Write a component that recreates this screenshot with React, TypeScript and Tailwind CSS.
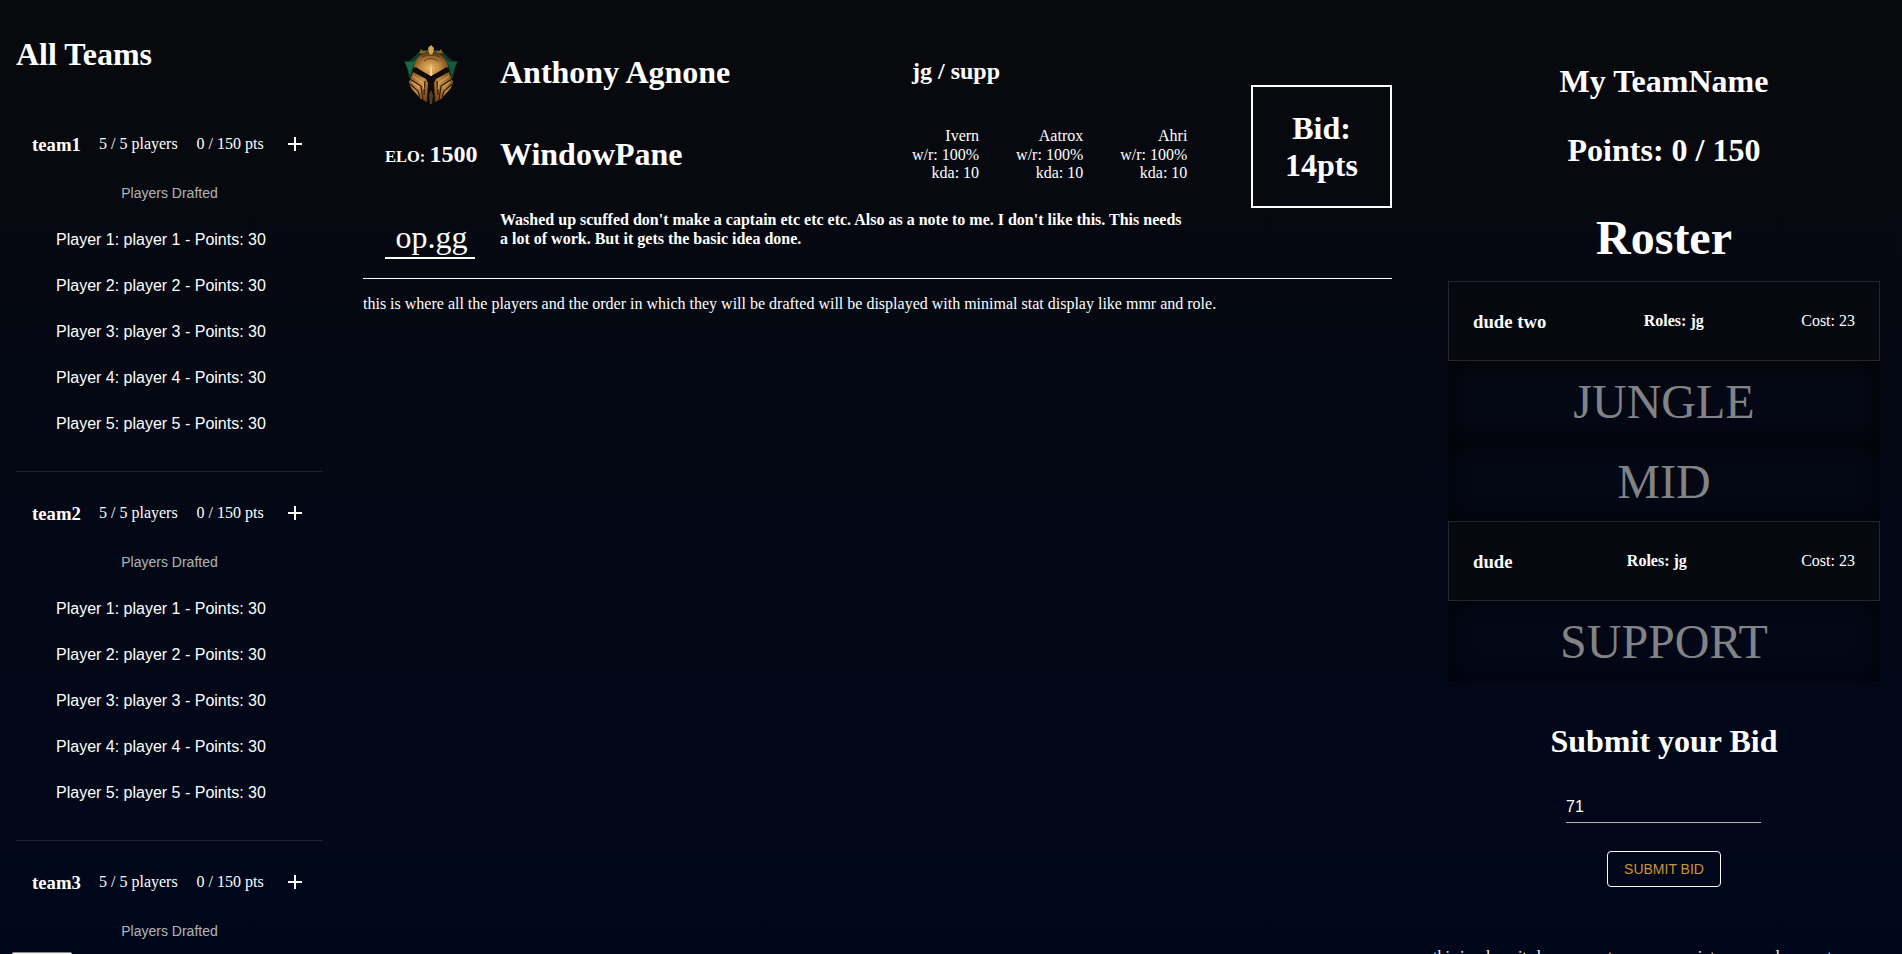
import React from "react";

const teams = ["team1", "team2", "team3"];
const players = [1, 2, 3, 4, 5];
const champions = ["Ivern", "Aatrox", "Ahri"];

function Helmet() {
  return (
    <svg width="54" height="60" viewBox="0 0 54 60" className="block">
      <defs>
        <radialGradient id="dome" cx="0.48" cy="0.62" r="0.62">
          <stop offset="0" stopColor="#eab968" />
          <stop offset="0.45" stopColor="#c08a40" />
          <stop offset="0.8" stopColor="#8a5825" />
          <stop offset="1" stopColor="#4a2a10" />
        </radialGradient>
        <linearGradient id="cheekL" x1="0" y1="0" x2="1" y2="1">
          <stop offset="0" stopColor="#7a4b1c" />
          <stop offset="0.5" stopColor="#c8924a" />
          <stop offset="1" stopColor="#5e3212" />
        </linearGradient>
        <linearGradient id="cheekR" x1="1" y1="0" x2="0" y2="1">
          <stop offset="0" stopColor="#6e4218" />
          <stop offset="0.5" stopColor="#c08a42" />
          <stop offset="1" stopColor="#5e3212" />
        </linearGradient>
      </defs>
      <path d="M0 16 L5 16 L10 12 L15 7 L39 7 L44 12 L49 16 L54 16 L51 23 L49 33 L5 33 L3 23 Z" fill="#0b3d2a" />
      <path d="M1 17 L9 17 L12 14 L8 24 L6 31 L4 24 Z" fill="#1b6b4a" />
      <path d="M53 17 L45 17 L42 14 L46 24 L48 31 L50 24 Z" fill="#155a3e" />
      <path d="M15 8 L17 4 L19 6 L27 5 L35 6 L37 4 L39 8 L33 9 L27 8 L21 9 Z" fill="#8f6228" />
      <path d="M19 5 L27 7 L35 5 L32 8 L22 8 Z" fill="#1a6a48" />
      <path d="M5 38 L10 22 L27 33 L44 22 L49 38 L47 44 L38 53 L32 58 L27 60 L22 58 L16 53 L7 44 Z" fill="#120905" />
      <path d="M10 22 C11 12 18 7 27 7 C36 7 43 12 44 22 L42 25 L27 33 L12 25 Z" fill="url(#dome)" />
      <path d="M27 18 L28.5 30 L27 33 L25.5 30 Z" fill="#f6d596" />
      <path d="M18 12 Q27 8 36 12 M20 16 Q27 11 34 16" fill="none" stroke="#5e3814" strokeWidth="0.9" />
      <path d="M11 23 L14 25 L27 32.5 L40 25 L43 23" fill="none" stroke="#060303" strokeWidth="2.2" />
      <path d="M9 27 L22 34 L24 38 L23 57 L17 54 L7 43 L5 37 Z" fill="url(#cheekL)" />
      <path d="M45 27 L32 34 L30 38 L31 57 L37 54 L47 43 L49 37 Z" fill="url(#cheekR)" />
      <path d="M6 34 L17 41 L19 55 M6 39 L14 46 L16 52 M21 36 L20 50" fill="none" stroke="#331808" strokeWidth="1.2" />
      <path d="M48 34 L37 41 L35 55 M48 39 L40 46 L38 52 M33 36 L34 50" fill="none" stroke="#331808" strokeWidth="1.2" />
      <path d="M9 31 L19 38 L20 44 M8 37 L15 42 M45 31 L35 38 L34 44 M46 37 L39 42" fill="none" stroke="#e3b368" strokeWidth="0.9" />
      <path d="M27 45 L29 50 L28 59 L26 59 L25 50 Z" fill="#4a4030" />
      <path d="M27 0 L30 3 L29 8 L27 10 L25 8 L24 3 Z" fill="#d8a458" />
    </svg>
  );
}

function Team({ name }: { name: string }) {
  return (
    <section className="h-[369px] shrink-0 border-b border-[#20232f] px-4">
      <div className="flex h-[66px] items-center pt-[16px]">
        <h3 className="w-[67px] pt-[1px] text-[18.72px] font-bold">{name}</h3>
        <span className="w-[97.5px] whitespace-nowrap">5 / 5 players</span>
        <span className="w-[86px] whitespace-nowrap">0 / 150 pts</span>
        <svg width="24" height="24" viewBox="0 0 24 24" fill="white">
          <path d="M19 13h-6v6h-2v-6H5v-2h6V5h2v6h6v2z" />
        </svg>
      </div>
      <div className="font-['Liberation_Sans',sans-serif]">
        <div className="flex h-12 items-center justify-center text-[14px] text-white/70">
          Players Drafted
        </div>
        {players.map((n) => (
          <div key={n} className="flex h-[46px] items-center px-6">
            {`Player ${n}: player ${n} - Points: 30`}
          </div>
        ))}
      </div>
    </section>
  );
}

function Filled({ name }: { name: string }) {
  return (
    <div className="flex h-20 shrink-0 justify-between border border-[#24262d] bg-[#05080f] px-6 pt-[30px]">
      <h3 className="text-[18.72px] leading-[20px] font-bold">{name}</h3>
      <h4 className="font-bold">Roles: jg</h4>
      <p>Cost: 23</p>
    </div>
  );
}

function Empty({ role }: { role: string }) {
  return (
    <div className="flex h-20 shrink-0 items-center justify-center text-[48px] leading-[55px] text-[#828387] shadow-[inset_0_0_20px_4px_rgba(0,0,0,0.7)]">
      {role}
    </div>
  );
}

export default function App() {
  return (
    <main className="relative flex h-[954px] w-[1902px] overflow-hidden bg-linear-to-b from-[#08090c] via-[#040815] to-[#01071b] font-['Liberation_Serif',serif] text-[16px] leading-[18px] text-white">
      <aside className="flex w-[323px] shrink-0 flex-col pl-4">
        <h1 className="h-[103px] shrink-0 pt-[36px] text-[32px] leading-[37px] font-bold">All Teams</h1>
        {teams.map((t) => (
          <Team key={t} name={t} />
        ))}
      </aside>

      <section className="ml-10 w-[1029px] shrink-0">
        <div className="box-content flex h-[258px] border-b border-white pb-[20px]">
          <div className="flex w-[137px] flex-col pl-[22px]">
            <div className="mt-[45px] ml-[19px]"><Helmet /></div>
            <div className="mt-[35px] whitespace-nowrap font-bold leading-[28px]">
              <span className="text-[16.5px]">ELO: </span>
              <span className="text-[24px]">1500</span>
            </div>
            <div className="mt-[48px] flex h-[40px] w-[90px] shrink-0 justify-center border-b-2 border-white pl-[3px] text-[32px] leading-[37px]">op.gg</div>
          </div>
          <div className="w-[700px]">
            <div className="flex h-[208px]">
              <div className="w-[412px] text-[32px] leading-[37px] font-bold">
                <h1 className="pt-[54px]">Anthony Agnone</h1>
                <h1 className="pt-[45px]">WindowPane</h1>
              </div>
              <div>
                <h2 className="pt-[57px] text-[24px] leading-[28px] font-bold">jg / supp</h2>
                <div className="mt-[42px] flex gap-[37px] text-right leading-[18.6px]">
                  {champions.map((c) => (
                    <div key={c}>
                      <p>{c}</p>
                      <p>w/r: 100%</p>
                      <p>kda: 10</p>
                    </div>
                  ))}
                </div>
              </div>
            </div>
            <h4 className="w-[690px] pt-[2px] leading-[19px] font-bold">
              Washed up scuffed don't make a captain etc etc etc. Also as a note to me. I don't like this. This needs a lot of work. But it gets the basic idea done.
            </h4>
          </div>
          <div className="mt-[85px] ml-auto flex h-[123px] w-[141px] items-center justify-center border-2 border-white text-center text-[32px] leading-[36.5px] font-bold">
            <div>
              <p>Bid:</p>
              <p>14pts</p>
            </div>
          </div>
        </div>
        <p className="pt-[16px]">
          this is where all the players and the order in which they will be drafted will be displayed with minimal stat display like mmr and role.
        </p>
      </section>

      <aside className="ml-[56px] flex w-[432px] shrink-0 flex-col">
        <div className="flex h-[281px] shrink-0 flex-col items-center pt-[63px] font-bold">
          <h1 className="text-[32px] leading-[37px]">My TeamName</h1>
          <h1 className="mt-[32px] text-[32px] leading-[37px]">Points: 0 / 150</h1>
          <h1 className="mt-[41px] text-[48px] leading-[55px]">Roster</h1>
        </div>
        <Filled name="dude two" />
        <Empty role="JUNGLE" />
        <Empty role="MID" />
        <Filled name="dude" />
        <Empty role="SUPPORT" />
        <div className="flex shrink-0 flex-col items-center pt-[42px]">
          <h1 className="text-[32px] leading-[37px] font-bold">Submit your Bid</h1>
          <div className="mt-[31px] mr-px flex h-[32px] w-[195px] items-center border-b border-white/70 font-['Liberation_Sans',sans-serif]">71</div>
          <button className="mt-[28px] h-[36px] w-[114px] rounded-[4px] border border-white font-['Liberation_Sans',sans-serif] text-[14px] text-[#cb9439]">
            SUBMIT BID
          </button>
        </div>
        <p className="-ml-[15px] shrink-0 pt-[61px] whitespace-nowrap">
          this is where it shows your team name points max and amount
        </p>
      </aside>

      <div className="absolute top-[952px] left-[12px] h-[10px] w-[60px] rounded-t-[2px] border-t border-[#8a8a8a] bg-[#f0f0f0]" />
    </main>
  );
}
